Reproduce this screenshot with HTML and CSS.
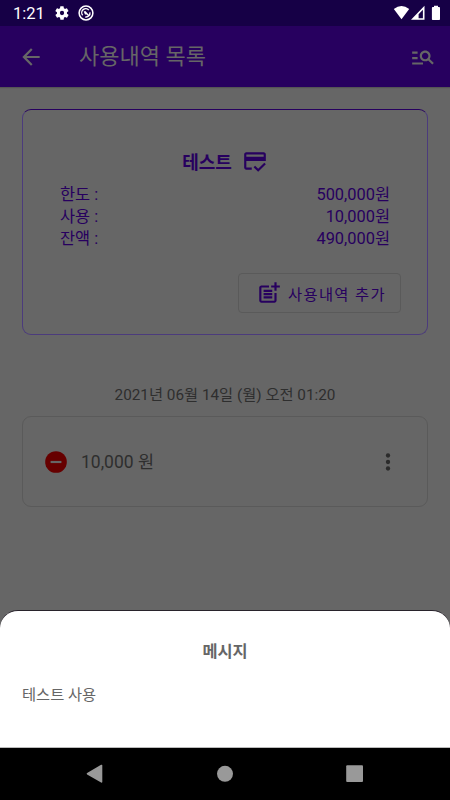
FILE: index.html
```html
<!DOCTYPE html>
<html lang="ko">
<head>
<meta charset="utf-8">
<title>사용내역 목록</title>
<link rel="stylesheet" href="styles.css">
</head>
<body>
<div class="phone">
  <header class="status">
    <span class="clock">1:21</span>
    <svg class="gear" width="16" height="16" viewBox="0 0 24 24"><path fill="#fff" d="M19.4 13a7.500 7.500 0 0 0 0-2l2.100-1.700a.5.5 0 0 0 .1-.6l-2-3.500a.5.5 0 0 0-.6-.2l-2.500 1a7.300 7.300 0 0 0-1.700-1l-.4-2.600a.5.5 0 0 0-.5-.4h-4a.5.5 0 0 0-.5.400L9 5a7.700 7.700 0 0 0-1.700 1l-2.500-1a.5.5 0 0 0-.6.200l-2 3.500a.5.5 0 0 0 .1.600L4.500 11a8 8 0 0 0 0 2l-2.100 1.700a.5.5 0 0 0-.1.600l2 3.500c.1.200.4.300.6.200l2.500-1c.5.400 1.100.700 1.700 1l.4 2.600c0 .2.2.4.5.4h4c.2 0 .4-.2.5-.4l.4-2.600a7.300 7.300 0 0 0 1.700-1l2.500 1c.2.100.5 0 .6-.2l2-3.500a.5.5 0 0 0-.1-.6zM12 15.200a3.200 3.200 0 1 1 0-6.400 3.200 3.200 0 0 1 0 6.400z"/></svg>
    <svg class="debug" width="16" height="16" viewBox="0 0 16 16"><circle cx="8" cy="8" r="6.900" fill="none" stroke="#fff" stroke-width="1.500"/><path d="M4.700 10.300A4 4 0 0 1 10.800 5.100M11.900 7.300A4 4 0 0 1 7.300 12" fill="none" stroke="#fff" stroke-width="1.400"/><path d="M5.700 6.600L7.300 5.900 11.700 10.700 10.700 11.600 8.600 9.400 7 9.400Z" fill="#fff"/></svg>
    <svg class="signals" width="50" height="16" viewBox="0 0 50 16"><path fill="#fff" d="M.8 3.900Q8.500-1.700 16.200 3.900L8.500 14.200Z"/><path fill="#fff" fill-rule="evenodd" d="M18 14.700L31.500.8V14.700ZM25.600 13.300H29.900V4.800L25.600 9.300Z"/><path fill="#fff" d="M41 .8h4v1.300h1.200a.8.800 0 0 1 .8.800V14.200a.8.800 0 0 1-.8.800h-6.500a.8.800 0 0 1-.8-.8V2.900a.8.800 0 0 1 .8-.8H41Z"/></svg>
  </header>
  <div class="appbar">
    <svg class="back" width="26" height="26" viewBox="0 0 24 24"><path fill="#666" d="M20 11H7.830l5.590-5.590L12 4l-8 8 8 8 1.410-1.410L7.830 13H20z"/></svg>
    <h1>사용내역 목록</h1>
    <svg class="search" width="26" height="26" viewBox="0 0 24 24"><path fill="#666" d="M7 9H2V7h5v2zm0 3H2v2h5v-2zm13.590 7l-3.830-3.830c-.8.520-1.740.830-2.760.830-2.760 0-5-2.240-5-5s2.240-5 5-5 5 2.240 5 5c0 1.020-.31 1.960-.83 2.750L22 17.590 20.590 19zM17 11c0-1.650-1.350-3-3-3s-3 1.350-3 3 1.350 3 3 3 3-1.350 3-3zM2 19h10v-2H2v2z"/></svg>
  </div>
  <main>
    <section class="summary">
      <div class="name"><span>테스트</span><svg width="26" height="26" viewBox="0 0 24 24"><path fill="#27005f" d="M20 4H4c-1.110 0-1.990.890-1.990 2L2 18c0 1.110.890 2 2 2h5v-2H4v-6h18V6c0-1.110-.89-2-2-2zm0 4H4V6h16v2zm-5.070 11.170l-2.830-2.830-1.410 1.410L14.930 22 22 14.930l-1.410-1.410-5.660 5.650z"/></svg></div>
      <dl>
        <div><dt>한도 :</dt><dd>500,000원</dd></div>
        <div><dt>사용 :</dt><dd>10,000원</dd></div>
        <div><dt>잔액 :</dt><dd>490,000원</dd></div>
      </dl>
      <button class="add"><svg width="26" height="26" viewBox="0 0 24 24"><path fill="#27005f" d="M17 19.220H5V7h7V5H5c-1.100 0-2 .9-2 2v12c0 1.100.9 2 2 2h12c1.100 0 2-.9 2-2v-7h-2v7.220zM19 2h-2v3h-3v2h3v2.990h2V7h3V5h-3zM7 9h8v2H7zM7 12v2h8v-2zM7 15h8v2H7z"/></svg><span>사용내역 추가</span></button>
    </section>
    <time>2021년 06월 14일 (월) 오전 01:20</time>
    <article class="entry">
      <svg width="26" height="26" viewBox="0 0 24 24"><circle cx="12" cy="12" r="10" fill="#660000"/><path fill="#666" d="M7 11h10v2H7z"/></svg>
      <span class="amount">10,000 원</span>
      <svg width="26" height="26" viewBox="0 0 24 24" fill="#2b2b2b"><circle cx="12" cy="6" r="2"/><circle cx="12" cy="12" r="2"/><circle cx="12" cy="18" r="2"/></svg>
    </article>
  </main>
  <section class="sheet">
    <h2>메시지</h2>
    <p>테스트 사용</p>
  </section>
  <nav>
    <svg width="18" height="20" viewBox="0 0 18 20"><path d="M1.500 9.700L15.500 1.500V17.900Z" fill="#999" stroke="#999" stroke-width="1.600" stroke-linejoin="round"/></svg>
    <svg width="18" height="20" viewBox="0 0 18 20"><circle cx="9" cy="9.800" r="8" fill="#999"/></svg>
    <svg width="18" height="20" viewBox="0 0 18 20"><rect x=".2" y="1.300" width="16.800" height="16.800" rx="1" fill="#999"/></svg>
  </nav>
</div>
</body>
</html>
```
FILE: styles.css
```css
* { box-sizing: border-box; margin: 0; padding: 0; }
body { font-family: Roboto, "Noto Sans CJK KR", sans-serif; background: #666; }
svg { display: block; flex: none; }
.phone { width: 450px; height: 800px; display: flex; flex-direction: column; overflow: hidden; }
.status { height: 26px; background: #160046; display: flex; align-items: center; padding: 0 7px 0 13px; color: #fff; }
.clock { font-size: 16.500px; width: 41px; line-height: 26px; padding-top: 2px; }
.debug { margin-left: 8px; }
.signals { margin-left: auto; }
.appbar { height: 61px; background: #27005f; display: flex; align-items: center; padding: 0 14px 0 18px; color: #666; box-shadow: 0 1px 1px #555; }
.appbar h1 { font-size: 22px; font-weight: 400; line-height: 30px; margin-left: 35px; }
.search { margin-left: auto; }
main { flex: 1; padding: 22px 22px 0; }
.summary { height: 226px; border: 1px solid #4b3b7c; border-top-color: #27005f; border-radius: 9px; padding: 38px 26px 0 37px; color: #27005f; display: flex; flex-direction: column; }
.name { display: flex; justify-content: center; align-items: center; gap: 10px; height: 26px; font-size: 18px; font-weight: 700; padding-right: 11px; }
dl { margin: 10px 11px 0 0; font-size: 16.400px; line-height: 22px; }
dl div { display: flex; justify-content: space-between; height: 22px; }
.add { align-self: flex-end; margin-top: 23px; width: 163px; height: 40px; border: 1px solid #5a5a5a; border-radius: 4px; background: none; display: flex; align-items: center; padding-left: 17px; gap: 6px; font: inherit; font-size: 15.300px; letter-spacing: 1.370px; color: #27005f; white-space: nowrap; }
time { display: block; text-align: center; font-size: 15.300px; line-height: 22px; margin-top: 49px; color: #2e2e2e; }
.entry { height: 91px; margin-top: 10px; border: 1px solid #5a5a5a; border-radius: 9px; display: flex; align-items: center; padding: 0 26px 0 20px; color: #2e2e2e; }
.amount { flex: 1; margin-left: 12px; font-size: 17.500px; line-height: 26px; }
.sheet { height: 138px; background: #fff; border-top: 1px solid #28232b; border-radius: 18px 18px 0 0; border-bottom: 1px solid #bbb; padding: 29px 22px 0; color: #666; }
.sheet h2 { font-size: 16.400px; font-weight: 700; line-height: 24px; text-align: center; }
.sheet p { font-size: 15.300px; line-height: 22px; margin-top: 20px; }
nav { height: 52px; background: #000; display: flex; align-items: center; justify-content: space-between; padding: 0 86px 0 86px; }
```
